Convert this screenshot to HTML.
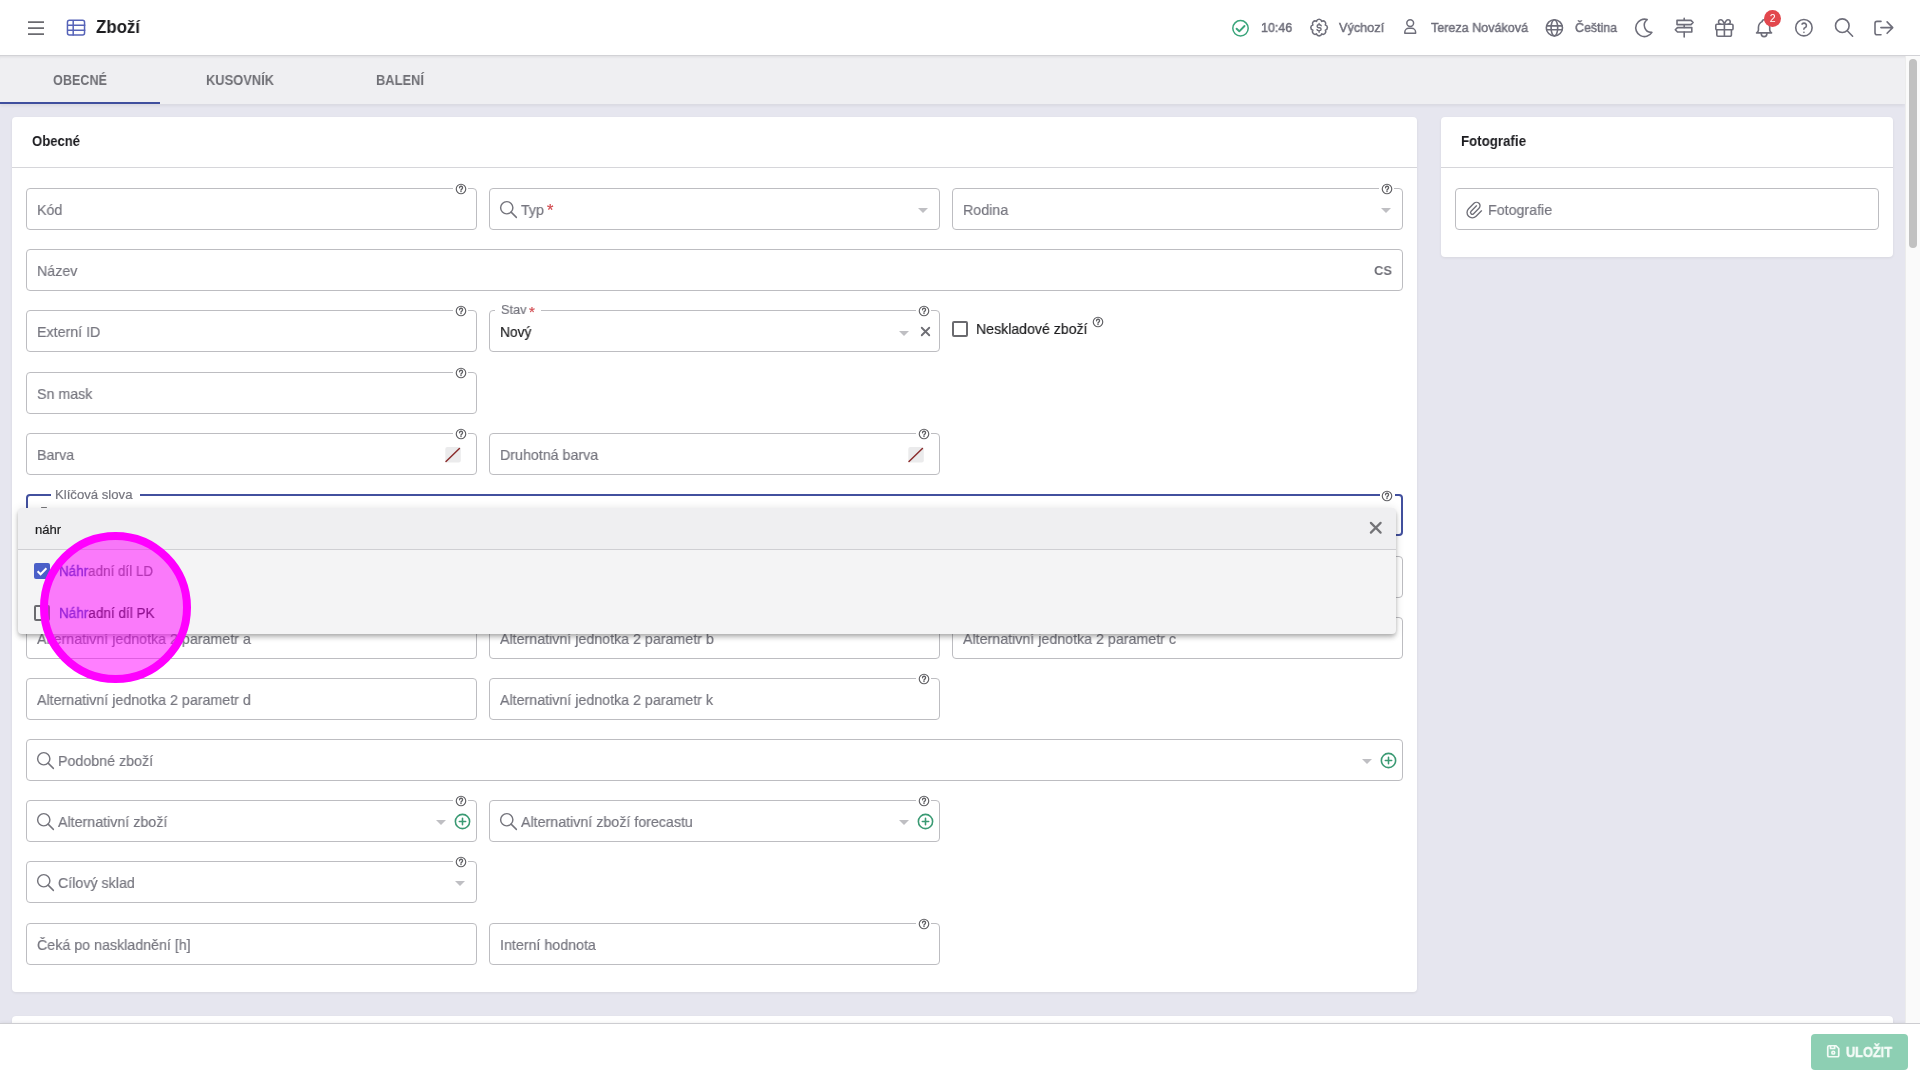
<!DOCTYPE html>
<html><head><meta charset="utf-8">
<style>
*{box-sizing:border-box}
html,body{margin:0;padding:0;width:1920px;height:1080px;overflow:hidden;font-family:"Liberation Sans", sans-serif;background:#e6e6ef;position:relative}
.t{position:absolute;white-space:nowrap;line-height:1;transform-origin:0 0;will-change:transform;-webkit-text-stroke:.2px currentColor}
.ic{position:absolute;display:block}
.hdr{position:absolute;left:0;top:0;width:1920px;height:56px;background:#fff;border-bottom:1px solid #d2d2d6}
.tabs{position:absolute;left:0;top:56px;width:1905px;height:48px;background:#efeff2;box-shadow:inset 0 3px 3px -2px rgba(0,0,0,.08),0 2px 3px rgba(0,0,0,.06)}
.card{position:absolute;background:#fff;border-radius:4px;box-shadow:0 1px 3px rgba(0,0,0,.07)}
.cline{position:absolute;height:1px;background:#d6d6da}
.f{position:absolute;border:1px solid #bdbdc1;border-radius:4px;background:#fff}
.foc{border:2px solid #42509e}
.hq{position:absolute;width:15px;height:15px;background:#fff}
.hq2{position:absolute;height:12px;background:#fff}
.dot{position:absolute;width:1.3px;height:1.3px;background:#66666a;border-radius:1px}
.caret{position:absolute;width:0;height:0;border-left:5px solid transparent;border-right:5px solid transparent;border-top:5px solid #bfbfc3}
.cb{position:absolute;width:16px;height:16px;border:2px solid #6a6a6e;border-radius:2px;background:transparent}
.cbc{position:absolute;z-index:21;width:16px;height:16px;border-radius:2px;background:#4a5fc8}
.cbc svg{display:block}
.sw{position:absolute;width:16px;height:16px;background:#e9e9ea;border-radius:2px;background-image:linear-gradient(135deg,transparent 44%,#a33a3a 44%,#a33a3a 56%,transparent 56%)}
.badge{position:absolute;left:1764.2px;top:10.2px;width:17.2px;height:17.2px;border-radius:50%;background:#e2474d;color:#fff;font-size:10.5px;line-height:17.2px;text-align:center}
.dd{position:absolute;z-index:20;left:18px;top:508px;width:1378px;height:126px;background:#f4f4f5;border-radius:4px;box-shadow:0 2px 4px -1px rgba(0,0,0,.2),0 4px 5px 0 rgba(0,0,0,.14),0 1px 10px 0 rgba(0,0,0,.12);overflow:hidden}
.ddh{position:absolute;left:0;top:0;width:100%;height:42px;background:#efeff1;border-bottom:1px solid #cfcfd3}
.foot{position:absolute;left:0;top:1023px;width:1920px;height:57px;background:#fff;border-top:1px solid #cdcdd1;box-shadow:0 -1px 3px rgba(0,0,0,.05)}
.btn{position:absolute;left:1811px;top:1034px;width:97px;height:36px;border-radius:4px;background:#8dcfb3}
.sb{position:absolute;left:1905px;top:56px;width:15px;height:967px;background:#fafafa;border-left:1px solid #ececec}
.sbt{position:absolute;left:1909px;top:59px;width:8px;height:189px;border-radius:4px;background:#c1c1c1}
.touch{position:absolute;z-index:30;left:40px;top:532px;width:151px;height:151px;border-radius:50%;border:8px solid #f0f;background:rgba(255,0,255,.5)}
</style></head><body>
<div class="hdr"></div><svg class="ic" style="left:23.80px;top:15.80px" width="24" height="24" viewBox="0 0 24 24" fill="none" stroke="#6b6b70" stroke-width="1.75" stroke-linecap="butt" stroke-linejoin="round"><path d="M4 6h16M4 12h16M4 18h16"/></svg><svg class="ic" style="left:66px;top:19px" width="20" height="17" viewBox="0 0 20 17" fill="none" stroke="#5663b8" stroke-width="1.5"><rect x="1.45" y="1.25" width="17.1" height="14.7" rx="2"/><path d="M1.2 6.2h18.1M1.2 11.3h18.1M7.2 1v15.5"/></svg><span class="t" style="left:96.00px;top:18.99px;font-size:17.5px;color:#1c1c1f;font-weight:bold;-webkit-text-stroke:0;transform:scaleX(0.9632);">Zboží</span><svg class="ic" style="left:0;top:0" width="1920" height="56" fill="none" stroke="#6e6e7a" stroke-width="1.6" stroke-linecap="round" stroke-linejoin="round"><circle cx="1240.5" cy="28.3" r="7.7" stroke="#3aa57b" stroke-width="1.5"/><path d="M1236.6 28.7l2.7 2.6l5.2 -5.3" stroke="#3aa57b" stroke-width="1.9"/><path d="M1325.34 30.18A2.65 2.65 0 0 1 1321.68 33.84A2.65 2.65 0 0 1 1316.52 33.84A2.65 2.65 0 0 1 1312.86 30.18A2.65 2.65 0 0 1 1312.86 25.02A2.65 2.65 0 0 1 1316.52 21.36A2.65 2.65 0 0 1 1321.68 21.36A2.65 2.65 0 0 1 1325.34 25.02A2.65 2.65 0 0 1 1325.34 30.18Z"/><path d="M1319.1 23.4v1.2M1319.1 30.9v1.3M1321.2 25.8q-.5 -1 -1.7 -1h-.8q-1.6 0 -1.6 1.45q0 1.4 1.6 1.45h.8q1.6 .05 1.6 1.45q0 1.45 -1.6 1.45h-.8q-1.2 0 -1.7 -1" stroke-width="1.4"/><circle cx="1410.2" cy="23.1" r="3.4" stroke-width="1.5"/><path d="M1404.8 33.2v-.9a4 4 0 0 1 4 -4h2.8a4 4 0 0 1 4 4v.9z" stroke-width="1.5"/><circle cx="1554.4" cy="27.8" r="8.1"/><path d="M1546.6 25.9h15.6M1546.6 29.7h15.6"/><ellipse cx="1554.4" cy="27.8" rx="3.3" ry="8.1"/><path d="M1647.2 19.6A8.7 8.7 0 1 0 1651.9 32.4A7.1 7.1 0 0 1 1647.2 19.6Z"/><path d="M1684.2 18.4v1.9M1684.2 24.7v2.7M1684.2 32.1v4.8"/><path d="M1677 20.4h14l2.1 2.1l-2.1 2.1h-14z"/><path d="M1691.8 27.6h-14.3l-2.2 2.2l2.2 2.2h14.3z"/><rect x="1715.8" y="24.3" width="17.2" height="5.5" rx="1.1"/><path d="M1716.8 29.9v5.2a1.2 1.2 0 0 0 1.2 1.2h12.2a1.2 1.2 0 0 0 1.2 -1.2v-5.2M1724.4 24.3v12"/><path d="M1724.4 24.3c-1 -2.9 -2.2 -4.5 -3.6 -4.5a2.25 2.25 0 0 0 0 4.5M1724.4 24.3c1 -2.9 2.2 -4.5 3.6 -4.5a2.25 2.25 0 0 1 0 4.5"/><g transform="translate(1752.8 16.9) scale(0.94)" stroke-width="1.7"><path d="M10 5a2 2 0 1 1 4 0a7 7 0 0 1 4 6v3a4 4 0 0 0 2 3h-16a4 4 0 0 0 2 -3v-3a7 7 0 0 1 4 -6"/><path d="M9 17v1a3 3 0 0 0 6 0v-1"/></g><circle cx="1803.9" cy="27.7" r="8.2"/><g transform="translate(1792.9 16.7) scale(0.92)" stroke-width="1.75"><path d="M12 17v.01"/><path d="M12 13.5a1.5 1.5 0 0 1 1 -1.5a2.6 2.6 0 1 0 -3 -4"/></g><circle cx="1842.3" cy="25.7" r="6.8"/><path d="M1847.3 30.7l5.3 5.5"/><path d="M1881 21.4h-4a2 2 0 0 0 -2 2v9.4a2 2 0 0 0 2 2h4M1880.9 27.6h11.8M1887.1 21.9l5.6 5.7l-5.6 5.7"/></svg><span class="t" style="left:1261.20px;top:20.80px;font-size:13px;color:#6e6e7a;-webkit-text-stroke:.45px currentColor;transform:scaleX(0.9621);">10:46</span><span class="t" style="left:1339.00px;top:20.80px;font-size:13px;color:#6e6e7a;-webkit-text-stroke:.45px currentColor;transform:scaleX(0.9731);">Výchozí</span><span class="t" style="left:1431.00px;top:20.80px;font-size:13px;color:#6e6e7a;-webkit-text-stroke:.45px currentColor;transform:scaleX(0.9657);">Tereza Nováková</span><span class="t" style="left:1575.10px;top:20.80px;font-size:13px;color:#6e6e7a;-webkit-text-stroke:.45px currentColor;transform:scaleX(0.9574);">Čeština</span><div class="badge">2</div><div class="tabs"></div><span class="t" style="left:53.00px;top:73.15px;font-size:14px;color:#6f6f75;font-weight:bold;-webkit-text-stroke:0;transform:scaleX(0.9015);">OBECNÉ</span><span class="t" style="left:206.00px;top:73.15px;font-size:14px;color:#6f6f75;font-weight:bold;-webkit-text-stroke:0;transform:scaleX(0.9202);">KUSOVNÍK</span><span class="t" style="left:376.00px;top:73.15px;font-size:14px;color:#6f6f75;font-weight:bold;-webkit-text-stroke:0;transform:scaleX(0.9211);">BALENÍ</span><div style="position:absolute;left:0;top:102px;width:160px;height:2px;background:#3f4f9e"></div><div class="card" style="left:12px;top:117px;width:1405px;height:875px"></div><div class="cline" style="left:12px;top:167px;width:1405px"></div><span class="t" style="left:32.00px;top:134.15px;font-size:14px;color:#1b1b1f;font-weight:bold;-webkit-text-stroke:0;transform:scaleX(0.9347);">Obecné</span><div class="card" style="left:1441px;top:117px;width:452px;height:140px"></div><div class="cline" style="left:1441px;top:167px;width:452px"></div><span class="t" style="left:1461.00px;top:134.15px;font-size:14px;color:#1b1b1f;font-weight:bold;-webkit-text-stroke:0;transform:scaleX(0.9497);">Fotografie</span><div class="card" style="left:12px;top:1016px;width:1881px;height:20px"></div><div class="f" style="left:1455px;top:188px;width:424px;height:42px"></div><svg class="ic" style="left:1464.00px;top:199.50px" width="20" height="20" viewBox="0 0 24 24" fill="none" stroke="#6f6f78" stroke-width="1.6" stroke-linecap="round" stroke-linejoin="round"><path d="M15 7l-6.5 6.5a1.5 1.5 0 0 0 3 3l6.5 -6.5a3 3 0 0 0 -6 -6l-6.5 6.5a4.5 4.5 0 0 0 9 9l6.5 -6.5"/></svg><span class="t" style="left:1488.00px;top:202.10px;font-size:15px;color:#76767f;transform:scaleX(0.9500);">Fotografie</span><div class="f" style="left:26px;top:188px;width:451px;height:42px"></div><span class="t" style="left:37.00px;top:202.10px;font-size:15px;color:#76767f;transform:scaleX(0.9500);">Kód</span><span class="hq" style="left:453.30px;top:181.80px"></span><svg class="ic" style="left:454.80px;top:183.30px" width="12" height="12" viewBox="0 0 12 12" fill="none" stroke="#606064" stroke-width="1.15" stroke-linecap="round"><circle cx="6" cy="6" r="4.75"/><path d="M4.55 4.75a1.5 1.5 0 1 1 2.25 1.3c-.5 .28 -.8 .55 -.8 1.1" stroke-width="1.35"/><circle cx="6" cy="8.45" r=".72" fill="#606064" stroke="none"/></svg>
<div class="f" style="left:489px;top:188px;width:451px;height:42px"></div><svg class="ic" style="left:498.00px;top:198.50px" width="21" height="21" viewBox="0 0 24 24" fill="none" stroke="#74747c" stroke-width="1.65" stroke-linecap="round" stroke-linejoin="round"><circle cx="10" cy="10" r="7"/><path d="M21 21l-6 -6"/></svg><span class="caret" style="left:918.0px;top:208.0px"></span>
<span class="t" style="left:521.00px;top:202.10px;font-size:15px;color:#76767f;transform:scaleX(0.9500);">Typ</span><span class="t" style="left:547.30px;top:202.03px;font-size:16.5px;color:#d24b50;">*</span><div class="f" style="left:952px;top:188px;width:451px;height:42px"></div><span class="t" style="left:963.00px;top:202.10px;font-size:15px;color:#76767f;transform:scaleX(0.9500);">Rodina</span><span class="hq" style="left:1379.30px;top:181.80px"></span><svg class="ic" style="left:1380.80px;top:183.30px" width="12" height="12" viewBox="0 0 12 12" fill="none" stroke="#606064" stroke-width="1.15" stroke-linecap="round"><circle cx="6" cy="6" r="4.75"/><path d="M4.55 4.75a1.5 1.5 0 1 1 2.25 1.3c-.5 .28 -.8 .55 -.8 1.1" stroke-width="1.35"/><circle cx="6" cy="8.45" r=".72" fill="#606064" stroke="none"/></svg><span class="caret" style="left:1381.0px;top:208.0px"></span>
<div class="f" style="left:26px;top:249px;width:1377px;height:42px"></div><span class="t" style="left:37.00px;top:263.10px;font-size:15px;color:#76767f;transform:scaleX(0.9500);">Název</span>
<span class="t" style="left:1374.00px;top:263.57px;font-size:13.5px;color:#707078;font-weight:bold;-webkit-text-stroke:0;transform:scaleX(0.9598);">CS</span><div class="f" style="left:26px;top:310px;width:451px;height:42px"></div><span class="t" style="left:37.00px;top:324.10px;font-size:15px;color:#76767f;transform:scaleX(0.9500);">Externí ID</span><span class="hq" style="left:453.30px;top:303.80px"></span><svg class="ic" style="left:454.80px;top:305.30px" width="12" height="12" viewBox="0 0 12 12" fill="none" stroke="#606064" stroke-width="1.15" stroke-linecap="round"><circle cx="6" cy="6" r="4.75"/><path d="M4.55 4.75a1.5 1.5 0 1 1 2.25 1.3c-.5 .28 -.8 .55 -.8 1.1" stroke-width="1.35"/><circle cx="6" cy="8.45" r=".72" fill="#606064" stroke="none"/></svg>
<div class="f" style="left:489px;top:310px;width:451px;height:42px"></div><span class="hq" style="left:916.30px;top:303.80px"></span><svg class="ic" style="left:917.80px;top:305.30px" width="12" height="12" viewBox="0 0 12 12" fill="none" stroke="#606064" stroke-width="1.15" stroke-linecap="round"><circle cx="6" cy="6" r="4.75"/><path d="M4.55 4.75a1.5 1.5 0 1 1 2.25 1.3c-.5 .28 -.8 .55 -.8 1.1" stroke-width="1.35"/><circle cx="6" cy="8.45" r=".72" fill="#606064" stroke="none"/></svg>
<span class="hq2" style="left:495px;top:300px;width:46px"></span><span class="t" style="left:500.50px;top:303.37px;font-size:13.5px;color:#76767f;transform:scaleX(0.9440);">Stav</span><span class="t" style="left:529.30px;top:303.60px;font-size:15px;color:#d24b50;">*</span><span class="t" style="left:500.00px;top:324.53px;font-size:14.5px;color:#1c1c1e;transform:scaleX(0.9500);">Nový</span><span class="caret" style="left:899.0px;top:331.0px"></span><svg class="ic" style="left:917.50px;top:324.20px" width="15" height="15" viewBox="0 0 24 24" fill="none" stroke="#6e6e74" stroke-width="2.9" stroke-linecap="round" stroke-linejoin="round"><path d="M18 6l-12 12M6 6l12 12"/></svg><span class="cb" style="left:952px;top:321px"></span><span class="t" style="left:976.00px;top:321.30px;font-size:15px;color:#1c1c1e;transform:scaleX(0.9417);">Neskladové zboží</span><span class="hq" style="left:1090.50px;top:314.50px"></span><svg class="ic" style="left:1092.00px;top:316.00px" width="12" height="12" viewBox="0 0 12 12" fill="none" stroke="#606064" stroke-width="1.15" stroke-linecap="round"><circle cx="6" cy="6" r="4.75"/><path d="M4.55 4.75a1.5 1.5 0 1 1 2.25 1.3c-.5 .28 -.8 .55 -.8 1.1" stroke-width="1.35"/><circle cx="6" cy="8.45" r=".72" fill="#606064" stroke="none"/></svg><div class="f" style="left:26px;top:372px;width:451px;height:42px"></div><span class="t" style="left:37.00px;top:386.10px;font-size:15px;color:#76767f;transform:scaleX(0.9500);">Sn mask</span><span class="hq" style="left:453.30px;top:365.80px"></span><svg class="ic" style="left:454.80px;top:367.30px" width="12" height="12" viewBox="0 0 12 12" fill="none" stroke="#606064" stroke-width="1.15" stroke-linecap="round"><circle cx="6" cy="6" r="4.75"/><path d="M4.55 4.75a1.5 1.5 0 1 1 2.25 1.3c-.5 .28 -.8 .55 -.8 1.1" stroke-width="1.35"/><circle cx="6" cy="8.45" r=".72" fill="#606064" stroke="none"/></svg>
<div class="f" style="left:26px;top:433px;width:451px;height:42px"></div><span class="t" style="left:37.00px;top:447.10px;font-size:15px;color:#76767f;transform:scaleX(0.9500);">Barva</span><span class="hq" style="left:453.30px;top:426.80px"></span><svg class="ic" style="left:454.80px;top:428.30px" width="12" height="12" viewBox="0 0 12 12" fill="none" stroke="#606064" stroke-width="1.15" stroke-linecap="round"><circle cx="6" cy="6" r="4.75"/><path d="M4.55 4.75a1.5 1.5 0 1 1 2.25 1.3c-.5 .28 -.8 .55 -.8 1.1" stroke-width="1.35"/><circle cx="6" cy="8.45" r=".72" fill="#606064" stroke="none"/></svg>
<svg class="ic" style="left:445px;top:447px" width="16" height="16" viewBox="0 0 16 16"><rect x="0.3" y="0" width="15.5" height="15.5" rx="2" fill="#ebebec"/><path d="M1 14.6L14.4 1.4" stroke="#8a2c2c" stroke-width="1.45" stroke-linecap="round"/></svg><div class="f" style="left:489px;top:433px;width:451px;height:42px"></div><span class="t" style="left:500.00px;top:447.10px;font-size:15px;color:#76767f;transform:scaleX(0.9500);">Druhotná barva</span><span class="hq" style="left:916.30px;top:426.80px"></span><svg class="ic" style="left:917.80px;top:428.30px" width="12" height="12" viewBox="0 0 12 12" fill="none" stroke="#606064" stroke-width="1.15" stroke-linecap="round"><circle cx="6" cy="6" r="4.75"/><path d="M4.55 4.75a1.5 1.5 0 1 1 2.25 1.3c-.5 .28 -.8 .55 -.8 1.1" stroke-width="1.35"/><circle cx="6" cy="8.45" r=".72" fill="#606064" stroke="none"/></svg>
<svg class="ic" style="left:908px;top:447px" width="16" height="16" viewBox="0 0 16 16"><rect x="0.3" y="0" width="15.5" height="15.5" rx="2" fill="#ebebec"/><path d="M1 14.6L14.4 1.4" stroke="#8a2c2c" stroke-width="1.45" stroke-linecap="round"/></svg><div class="f foc" style="left:26px;top:494px;width:1377px;height:42px"></div><span class="hq2" style="left:51px;top:488px;width:89px"></span><span class="t" style="left:54.50px;top:488.00px;font-size:13px;color:#76767f;transform:scaleX(1.0119);">Klíčová slova</span><span class="hq" style="left:1379.50px;top:488.10px"></span><svg class="ic" style="left:1381.00px;top:489.60px" width="12" height="12" viewBox="0 0 12 12" fill="none" stroke="#606064" stroke-width="1.15" stroke-linecap="round"><circle cx="6" cy="6" r="4.75"/><path d="M4.55 4.75a1.5 1.5 0 1 1 2.25 1.3c-.5 .28 -.8 .55 -.8 1.1" stroke-width="1.35"/><circle cx="6" cy="8.45" r=".72" fill="#606064" stroke="none"/></svg><span style="position:absolute;left:40.5px;top:506.8px;width:6.6px;height:1.4px;border-radius:1px;background:#77777a"></span><div class="f" style="left:952px;top:556px;width:451px;height:42px"></div>
<div class="f" style="left:26px;top:617px;width:451px;height:42px"></div><span class="t" style="left:37.00px;top:631.10px;font-size:15px;color:#76767f;transform:scaleX(0.9500);">Alternativní jednotka 2 parametr a</span>
<div class="f" style="left:489px;top:617px;width:451px;height:42px"></div><span class="t" style="left:500.00px;top:631.10px;font-size:15px;color:#76767f;transform:scaleX(0.9500);">Alternativní jednotka 2 parametr b</span>
<div class="f" style="left:952px;top:617px;width:451px;height:42px"></div><span class="t" style="left:963.00px;top:631.10px;font-size:15px;color:#76767f;transform:scaleX(0.9500);">Alternativní jednotka 2 parametr c</span>
<div class="f" style="left:26px;top:678px;width:451px;height:42px"></div><span class="t" style="left:37.00px;top:692.10px;font-size:15px;color:#76767f;transform:scaleX(0.9500);">Alternativní jednotka 2 parametr d</span>
<div class="f" style="left:489px;top:678px;width:451px;height:42px"></div><span class="t" style="left:500.00px;top:692.10px;font-size:15px;color:#76767f;transform:scaleX(0.9500);">Alternativní jednotka 2 parametr k</span><span class="hq" style="left:916.30px;top:671.80px"></span><svg class="ic" style="left:917.80px;top:673.30px" width="12" height="12" viewBox="0 0 12 12" fill="none" stroke="#606064" stroke-width="1.15" stroke-linecap="round"><circle cx="6" cy="6" r="4.75"/><path d="M4.55 4.75a1.5 1.5 0 1 1 2.25 1.3c-.5 .28 -.8 .55 -.8 1.1" stroke-width="1.35"/><circle cx="6" cy="8.45" r=".72" fill="#606064" stroke="none"/></svg>
<div class="f" style="left:26px;top:739px;width:1377px;height:42px"></div><svg class="ic" style="left:35.00px;top:749.50px" width="21" height="21" viewBox="0 0 24 24" fill="none" stroke="#74747c" stroke-width="1.65" stroke-linecap="round" stroke-linejoin="round"><circle cx="10" cy="10" r="7"/><path d="M21 21l-6 -6"/></svg><span class="t" style="left:58.00px;top:753.10px;font-size:15px;color:#76767f;transform:scaleX(0.9500);">Podobné zboží</span><span class="caret" style="left:1362.0px;top:759.0px"></span><svg class="ic" style="left:1378.50px;top:750.90px" width="19" height="19" viewBox="0 0 24 24" fill="none" stroke="#3a9a73" stroke-width="2" stroke-linecap="round" stroke-linejoin="round"><circle cx="12" cy="12" r="9"/><path d="M8 12h8M12 8v8"/></svg>
<div class="f" style="left:26px;top:800px;width:451px;height:42px"></div><svg class="ic" style="left:35.00px;top:810.50px" width="21" height="21" viewBox="0 0 24 24" fill="none" stroke="#74747c" stroke-width="1.65" stroke-linecap="round" stroke-linejoin="round"><circle cx="10" cy="10" r="7"/><path d="M21 21l-6 -6"/></svg><span class="t" style="left:58.00px;top:814.10px;font-size:15px;color:#76767f;transform:scaleX(0.9500);">Alternativní zboží</span><span class="hq" style="left:453.30px;top:793.80px"></span><svg class="ic" style="left:454.80px;top:795.30px" width="12" height="12" viewBox="0 0 12 12" fill="none" stroke="#606064" stroke-width="1.15" stroke-linecap="round"><circle cx="6" cy="6" r="4.75"/><path d="M4.55 4.75a1.5 1.5 0 1 1 2.25 1.3c-.5 .28 -.8 .55 -.8 1.1" stroke-width="1.35"/><circle cx="6" cy="8.45" r=".72" fill="#606064" stroke="none"/></svg><span class="caret" style="left:436.0px;top:820.0px"></span><svg class="ic" style="left:452.50px;top:811.90px" width="19" height="19" viewBox="0 0 24 24" fill="none" stroke="#3a9a73" stroke-width="2" stroke-linecap="round" stroke-linejoin="round"><circle cx="12" cy="12" r="9"/><path d="M8 12h8M12 8v8"/></svg>
<div class="f" style="left:489px;top:800px;width:451px;height:42px"></div><svg class="ic" style="left:498.00px;top:810.50px" width="21" height="21" viewBox="0 0 24 24" fill="none" stroke="#74747c" stroke-width="1.65" stroke-linecap="round" stroke-linejoin="round"><circle cx="10" cy="10" r="7"/><path d="M21 21l-6 -6"/></svg><span class="t" style="left:521.00px;top:814.10px;font-size:15px;color:#76767f;transform:scaleX(0.9500);">Alternativní zboží forecastu</span><span class="hq" style="left:916.30px;top:793.80px"></span><svg class="ic" style="left:917.80px;top:795.30px" width="12" height="12" viewBox="0 0 12 12" fill="none" stroke="#606064" stroke-width="1.15" stroke-linecap="round"><circle cx="6" cy="6" r="4.75"/><path d="M4.55 4.75a1.5 1.5 0 1 1 2.25 1.3c-.5 .28 -.8 .55 -.8 1.1" stroke-width="1.35"/><circle cx="6" cy="8.45" r=".72" fill="#606064" stroke="none"/></svg><span class="caret" style="left:899.0px;top:820.0px"></span><svg class="ic" style="left:915.50px;top:811.90px" width="19" height="19" viewBox="0 0 24 24" fill="none" stroke="#3a9a73" stroke-width="2" stroke-linecap="round" stroke-linejoin="round"><circle cx="12" cy="12" r="9"/><path d="M8 12h8M12 8v8"/></svg>
<div class="f" style="left:26px;top:861px;width:451px;height:42px"></div><svg class="ic" style="left:35.00px;top:871.50px" width="21" height="21" viewBox="0 0 24 24" fill="none" stroke="#74747c" stroke-width="1.65" stroke-linecap="round" stroke-linejoin="round"><circle cx="10" cy="10" r="7"/><path d="M21 21l-6 -6"/></svg><span class="t" style="left:58.00px;top:875.10px;font-size:15px;color:#76767f;transform:scaleX(0.9500);">Cílový sklad</span><span class="hq" style="left:453.30px;top:854.80px"></span><svg class="ic" style="left:454.80px;top:856.30px" width="12" height="12" viewBox="0 0 12 12" fill="none" stroke="#606064" stroke-width="1.15" stroke-linecap="round"><circle cx="6" cy="6" r="4.75"/><path d="M4.55 4.75a1.5 1.5 0 1 1 2.25 1.3c-.5 .28 -.8 .55 -.8 1.1" stroke-width="1.35"/><circle cx="6" cy="8.45" r=".72" fill="#606064" stroke="none"/></svg><span class="caret" style="left:455.0px;top:881.0px"></span>
<div class="f" style="left:26px;top:923px;width:451px;height:42px"></div><span class="t" style="left:37.00px;top:937.10px;font-size:15px;color:#76767f;transform:scaleX(0.9500);">Čeká po naskladnění [h]</span>
<div class="f" style="left:489px;top:923px;width:451px;height:42px"></div><span class="t" style="left:500.00px;top:937.10px;font-size:15px;color:#76767f;transform:scaleX(0.9500);">Interní hodnota</span><span class="hq" style="left:916.30px;top:916.80px"></span><svg class="ic" style="left:917.80px;top:918.30px" width="12" height="12" viewBox="0 0 12 12" fill="none" stroke="#606064" stroke-width="1.15" stroke-linecap="round"><circle cx="6" cy="6" r="4.75"/><path d="M4.55 4.75a1.5 1.5 0 1 1 2.25 1.3c-.5 .28 -.8 .55 -.8 1.1" stroke-width="1.35"/><circle cx="6" cy="8.45" r=".72" fill="#606064" stroke="none"/></svg>
<div class="dd"><div class="ddh"></div></div><span class="t" style="left:35.00px;top:522.60px;font-size:13px;color:#1c1c1e;transform:scaleX(1.0069);z-index:21;">náhr</span><span style="position:absolute;z-index:21;left:0;top:0"><svg class="ic" style="left:1366.25px;top:518.25px" width="19.5" height="19.5" viewBox="0 0 24 24" fill="none" stroke="#737377" stroke-width="2.7" stroke-linecap="round" stroke-linejoin="round"><path d="M18 6l-12 12M6 6l12 12"/></svg></span><span class="cbc" style="left:34px;top:563px"><svg width="16" height="16" viewBox="0 0 16 16"><path d="M3.6 8.2l3 3l5.8 -6" fill="none" stroke="#fff" stroke-width="2"/></svg></span><span class="t" style="left:59.00px;top:563.95px;font-size:14px;color:#6a6a6a;transform:scaleX(0.9586);z-index:21;"><span style="color:#3446b0;-webkit-text-stroke:.35px #3446b0">Náhr</span>adní díl LD</span><span class="cb" style="left:34px;top:605px;z-index:21"></span><span class="t" style="left:59.00px;top:605.65px;font-size:14px;color:#222;transform:scaleX(0.9662);z-index:21;"><span style="color:#3446b0;-webkit-text-stroke:.35px #3446b0">Náhr</span>adní díl PK</span><div class="foot"></div><div class="btn"></div><svg class="ic" style="left:1824.95px;top:1043.35px" width="16.5" height="16.5" viewBox="0 0 24 24" fill="none" stroke="#f2fbf6" stroke-width="2.5" stroke-linecap="round" stroke-linejoin="round"><path d="M6 4h10l4 4v10a2 2 0 0 1 -2 2h-12a2 2 0 0 1 -2 -2v-12a2 2 0 0 1 2 -2"/><circle cx="12" cy="14" r="2"/><path d="M14 4v4h-6v-4"/></svg><span class="t" style="left:1845.50px;top:1045.15px;font-size:14px;color:#f4fbf7;font-weight:bold;-webkit-text-stroke:.45px #f4fbf7;transform:scaleX(0.9101);">ULOŽIT</span><div class="sb"></div><div class="sbt"></div><div class="touch"></div>
</body></html>
